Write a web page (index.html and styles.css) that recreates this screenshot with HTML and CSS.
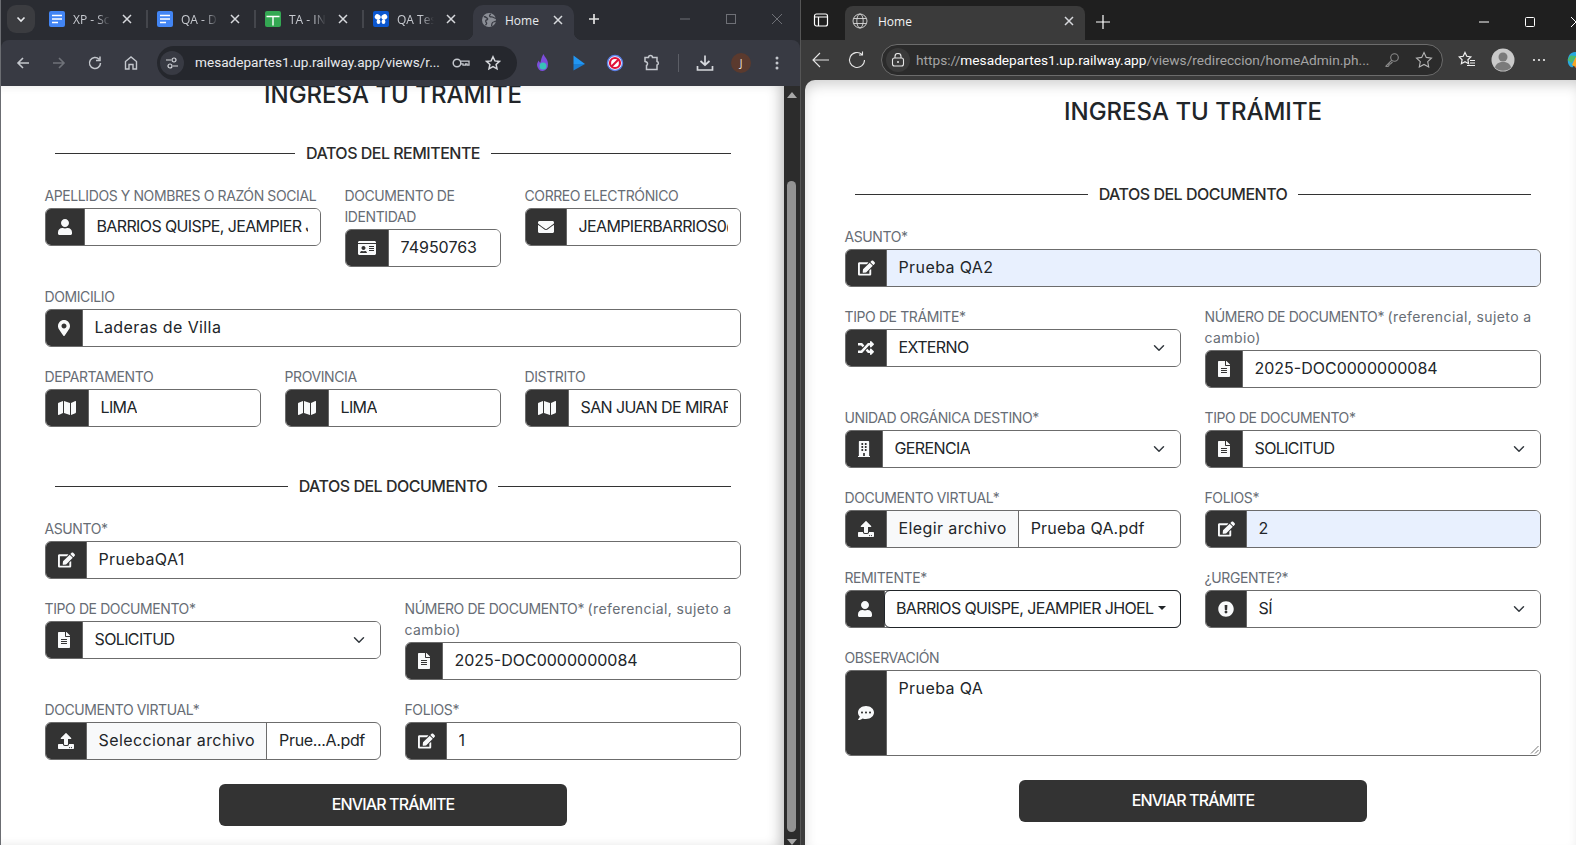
FILE: index.html
```html
<!DOCTYPE html>
<html lang="es">
<head>
<meta charset="utf-8">
<title>Mesa de partes</title>
<link rel="stylesheet" href="styles.css">
</head>
<body>
<svg class="defs" aria-hidden="true">
  <symbol id="i-user" viewBox="0 0 448 512"><path d="M224 256c70.7 0 128-57.3 128-128S294.7 0 224 0 96 57.3 96 128s57.3 128 128 128zm89.6 32h-16.7c-22.2 10.2-46.9 16-72.9 16s-50.6-5.8-72.9-16h-16.7C60.2 288 0 348.2 0 422.4V464c0 26.5 21.5 48 48 48h352c26.5 0 48-21.5 48-48v-41.6c0-74.2-60.2-134.4-134.4-134.4z"/></symbol>
  <symbol id="i-mail" viewBox="0 0 512 512"><path d="M502.3 190.8c3.9-3.1 9.7-.2 9.7 4.7V400c0 26.5-21.5 48-48 48H48c-26.5 0-48-21.5-48-48V195.6c0-5 5.7-7.8 9.7-4.7 22.4 17.4 52.1 39.5 154.1 113.6 21.1 15.4 56.7 47.8 92.2 47.6 35.7.3 72-32.8 92.3-47.6 102-74.1 131.6-96.3 154-113.7zM256 320c23.2.4 56.6-29.2 73.4-41.4 132.7-96.3 142.8-104.7 173.4-128.7 5.8-4.5 9.2-11.5 9.2-18.9v-19c0-26.5-21.5-48-48-48H48C21.5 64 0 85.5 0 112v19c0 7.4 3.4 14.3 9.2 18.9 30.6 23.9 40.7 32.4 173.4 128.7 16.8 12.2 50.2 41.8 73.4 41.4z"/></symbol>
  <symbol id="i-pin" viewBox="0 0 384 512"><path d="M172.268 501.67C26.97 291.031 0 269.413 0 192 0 85.961 85.961 0 192 0s192 85.961 192 192c0 77.413-26.97 99.031-172.268 309.67-9.535 13.774-29.93 13.773-39.464 0zM192 272c44.183 0 80-35.817 80-80s-35.817-80-80-80-80 35.817-80 80 35.817 80 80 80z"/></symbol>
  <symbol id="i-map" viewBox="0 0 576 512"><path d="M0 117.66v346.32c0 11.32 11.43 19.06 21.94 14.86L160 416V32L20.12 87.95A32.006 32.006 0 0 0 0 117.66zM192 416l192 64V96L192 32v384zM554.06 33.16L416 96v384l139.88-55.95A31.996 31.996 0 0 0 576 394.34V48.02c0-11.32-11.43-19.06-21.94-14.86z"/></symbol>
  <symbol id="i-edit" viewBox="0 0 576 512"><path d="M402.6 83.2l90.2 90.2c3.8 3.8 3.8 10 0 13.8L274.4 405.6l-92.8 10.3c-12.4 1.4-22.9-9.1-21.5-21.5l10.3-92.8L388.8 83.2c3.8-3.8 10-3.8 13.8 0zm162-22.9l-48.8-48.8c-15.2-15.2-39.9-15.2-55.2 0l-35.4 35.4c-3.8 3.8-3.8 10 0 13.8l90.2 90.2c3.8 3.8 10 3.8 13.8 0l35.4-35.4c15.2-15.3 15.2-40 0-55.2zM384 346.2V448H64V128h229.8c3.2 0 6.2-1.3 8.5-3.5l40-40c7.6-7.6 2.2-20.5-8.5-20.5H48C21.5 64 0 85.5 0 112v352c0 26.5 21.5 48 48 48h352c26.5 0 48-21.5 48-48V306.2c0-10.7-12.9-16-20.5-8.5l-40 40c-2.2 2.3-3.5 5.3-3.5 8.5z"/></symbol>
  <symbol id="i-file" viewBox="0 0 384 512"><path d="M224 136V0H24C10.7 0 0 10.7 0 24v464c0 13.3 10.7 24 24 24h336c13.3 0 24-10.7 24-24V160H248c-13.2 0-24-10.8-24-24zm64 236c0 6.6-5.4 12-12 12H108c-6.6 0-12-5.4-12-12v-8c0-6.6 5.4-12 12-12h168c6.6 0 12 5.4 12 12v8zm0-64c0 6.6-5.4 12-12 12H108c-6.6 0-12-5.4-12-12v-8c0-6.6 5.4-12 12-12h168c6.6 0 12 5.4 12 12v8zm0-72v8c0 6.6-5.4 12-12 12H108c-6.6 0-12-5.4-12-12v-8c0-6.6 5.4-12 12-12h168c6.6 0 12 5.4 12 12zm96-114.1v6.1H256V0h6.1c6.4 0 12.5 2.5 17 7l97.9 98c4.5 4.5 7 10.6 7 16.9z"/></symbol>
  <symbol id="i-upload" viewBox="0 0 512 512"><path d="M296 384h-80c-13.3 0-24-10.7-24-24V192h-87.7c-17.8 0-26.7-21.5-14.1-34.1L242.3 5.7c7.5-7.5 19.8-7.5 27.3 0l152.2 152.2c12.6 12.6 3.7 34.1-14.1 34.1H320v168c0 13.3-10.7 24-24 24zm216-8v112c0 13.3-10.7 24-24 24H24c-13.3 0-24-10.7-24-24V376c0-13.3 10.7-24 24-24h136v8c0 30.9 25.1 56 56 56h80c30.9 0 56-25.1 56-56v-8h136c13.3 0 24 10.7 24 24zm-124 88c0-11-9-20-20-20s-20 9-20 20 9 20 20 20 20-9 20-20zm64 0c0-11-9-20-20-20s-20 9-20 20 9 20 20 20 20-9 20-20z"/></symbol>
  <symbol id="i-id" viewBox="0 0 576 512"><path d="M528 32H48C21.5 32 0 53.5 0 80v16h576V80c0-26.5-21.5-48-48-48zM0 432c0 26.5 21.5 48 48 48h480c26.5 0 48-21.5 48-48V128H0v304zm352-232c0-4.4 3.6-8 8-8h144c4.4 0 8 3.6 8 8v16c0 4.4-3.6 8-8 8H360c-4.4 0-8-3.6-8-8v-16zm0 64c0-4.4 3.6-8 8-8h144c4.4 0 8 3.6 8 8v16c0 4.4-3.6 8-8 8H360c-4.4 0-8-3.6-8-8v-16zm0 64c0-4.4 3.6-8 8-8h144c4.4 0 8 3.6 8 8v16c0 4.4-3.6 8-8 8H360c-4.4 0-8-3.6-8-8v-16zM176 192c35.3 0 64 28.7 64 64s-28.7 64-64 64-64-28.7-64-64 28.7-64 64-64zM67.1 396.2C75.5 370.5 99.6 352 128 352h8.2c12.3 5.1 25.7 8 39.8 8s27.6-2.9 39.8-8h8.2c28.4 0 52.5 18.5 60.9 44.2 3.2 9.9-5.2 19.8-15.6 19.8H82.7c-10.4 0-18.8-10-15.6-19.8z"/></symbol>
  <symbol id="i-random" viewBox="0 0 512 512"><path d="M504.971 359.029c9.373 9.373 9.373 24.569 0 33.941l-80 79.984c-15.01 15.01-40.971 4.49-40.971-16.971V416h-58.785a12.004 12.004 0 0 1-8.773-3.812l-70.556-75.596 53.333-57.143L352 336h32v-39.981c0-21.438 25.943-31.998 40.971-16.971l80 79.981zM12 176h84l52.781 56.551 53.333-57.143-70.556-75.596A11.999 11.999 0 0 0 122.785 96H12c-6.627 0-12 5.373-12 12v56c0 6.627 5.373 12 12 12zm372 0v39.984c0 21.46 25.961 31.98 40.971 16.971l80-79.984c9.373-9.373 9.373-24.569 0-33.941l-80-79.981C409.943 24.021 384 34.582 384 56.019V96h-58.785a12.004 12.004 0 0 0-8.773 3.812L96 336H12c-6.627 0-12 5.373-12 12v56c0 6.627 5.373 12 12 12h110.785c3.326 0 6.503-1.381 8.773-3.812L352 176h32z"/></symbol>
  <symbol id="i-building" viewBox="0 0 448 512" preserveAspectRatio="none"><path d="M436 480h-20V24c0-13.255-10.745-24-24-24H56C42.745 0 32 10.745 32 24v456H12c-6.627 0-12 5.373-12 12v20h448v-20c0-6.627-5.373-12-12-12zM128 76c0-6.627 5.373-12 12-12h40c6.627 0 12 5.373 12 12v40c0 6.627-5.373 12-12 12h-40c-6.627 0-12-5.373-12-12V76zm0 96c0-6.627 5.373-12 12-12h40c6.627 0 12 5.373 12 12v40c0 6.627-5.373 12-12 12h-40c-6.627 0-12-5.373-12-12v-40zm52 148h-40c-6.627 0-12-5.373-12-12v-40c0-6.627 5.373-12 12-12h40c6.627 0 12 5.373 12 12v40c0 6.627-5.373 12-12 12zm76 160h-64v-84c0-6.627 5.373-12 12-12h40c6.627 0 12 5.373 12 12v84zm64-172c0 6.627-5.373 12-12 12h-40c-6.627 0-12-5.373-12-12v-40c0-6.627 5.373-12 12-12h40c6.627 0 12 5.373 12 12v40zm0-96c0 6.627-5.373 12-12 12h-40c-6.627 0-12-5.373-12-12v-40c0-6.627 5.373-12 12-12h40c6.627 0 12 5.373 12 12v40zm0-96c0 6.627-5.373 12-12 12h-40c-6.627 0-12-5.373-12-12V76c0-6.627 5.373-12 12-12h40c6.627 0 12 5.373 12 12v40z"/></symbol>
  <symbol id="i-alert" viewBox="0 0 512 512"><path d="M504 256c0 136.997-111.043 248-248 248S8 392.997 8 256C8 119.083 119.043 8 256 8s248 111.083 248 248zm-248 50c-25.405 0-46 20.595-46 46s20.595 46 46 46 46-20.595 46-46-20.595-46-46-46zm-43.673-165.346l7.418 136c.347 6.364 5.609 11.346 11.982 11.346h48.546c6.373 0 11.635-4.982 11.982-11.346l7.418-136c.375-6.874-5.098-12.654-11.982-12.654h-63.383c-6.884 0-12.356 5.78-11.981 12.654z"/></symbol>
  <symbol id="i-comment" viewBox="0 0 512 512"><path d="M256 32C114.6 32 0 125.1 0 240c0 49.6 21.4 95 57 130.7C44.5 421.1 2.7 466 2.2 466.5c-2.2 2.3-2.8 5.7-1.5 8.7S4.8 480 8 480c66.3 0 116-31.8 140.6-51.4 32.7 12.3 69 19.4 107.4 19.4 141.4 0 256-93.1 256-208S397.4 32 256 32zM128 272c-17.7 0-32-14.3-32-32s14.3-32 32-32 32 14.3 32 32-14.3 32-32 32zm128 0c-17.7 0-32-14.3-32-32s14.3-32 32-32 32 14.3 32 32-14.3 32-32 32zm128 0c-17.7 0-32-14.3-32-32s14.3-32 32-32 32 14.3 32 32-14.3 32-32 32z"/></symbol>
  <symbol id="i-chev" viewBox="0 0 16 16"><path d="M2 5l6 6 6-6" fill="none" stroke="#343a40" stroke-width="2" stroke-linecap="round" stroke-linejoin="round"/></symbol>
  <symbol id="i-x" viewBox="0 0 10 10"><path d="M1 1l8 8M9 1l-8 8" fill="none" stroke="currentColor" stroke-width="1.5"/></symbol>
  <symbol id="i-docs" viewBox="0 0 16 16"><rect width="16" height="16" rx="2" fill="#4285f4"/><path d="M3 4.500h10M3 8h10M3 11.500h6" stroke="#fff" stroke-width="1.600"/></symbol>
</svg>

<section class="win chrome">
  <header class="c-tabs">
    <div class="c-list"><svg class="s10" viewBox="0 0 10 10"><path d="M1.500 3.500L5 7l3.500-3.500" fill="none" stroke="#e8eaed" stroke-width="1.600"/></svg></div>
    <div class="c-tab"><svg class="s16"><use href="#i-docs"/></svg><span class="c-title">XP - Sc</span><svg class="x"><use href="#i-x"/></svg><i class="c-sep"></i></div>
    <div class="c-tab"><svg class="s16"><use href="#i-docs"/></svg><span class="c-title">QA - D</span><svg class="x"><use href="#i-x"/></svg><i class="c-sep"></i></div>
    <div class="c-tab"><svg class="s16" viewBox="0 0 16 16"><rect width="16" height="16" rx="2" fill="#34a853"/><path d="M1.500 5.500h13M8 5.500v9" stroke="#fff" stroke-width="1.400"/></svg><span class="c-title">TA - IN</span><svg class="x"><use href="#i-x"/></svg><i class="c-sep"></i></div>
    <div class="c-tab"><svg class="s16" viewBox="0 0 16 16"><rect width="16" height="16" rx="2" fill="#0b57d0"/><g fill="#fff"><ellipse cx="4.700" cy="6" rx="3" ry="2.700" transform="rotate(30 4.700 6)"/><ellipse cx="11.300" cy="6" rx="3" ry="2.700" transform="rotate(-30 11.300 6)"/><ellipse cx="5.500" cy="10.800" rx="1.900" ry="2.200"/><ellipse cx="10.500" cy="10.800" rx="1.900" ry="2.200"/></g></svg><span class="c-title">QA Tes</span><svg class="x"><use href="#i-x"/></svg></div>
    <div class="c-active">
      <svg class="s14" viewBox="0 0 16 16"><circle cx="8" cy="8" r="8" fill="#8b8e96"/><path d="M2 4c2 0 3 1 4 2s0 2-1 2-1 2 0 3-1 3-1 3M10 1c-1 1-2 2-1 3s3 0 4 1 2 1 3 1M11 15c0-2 0-3 1-4s3-1 4-2" fill="none" stroke="#383a43" stroke-width="1.500"/></svg>
      <span class="c-home">Home</span>
      <svg class="x x-end"><use href="#i-x"/></svg>
    </div>
    <svg class="plus" viewBox="0 0 12 12"><path d="M6 1v10M1 6h10" stroke="#e3e3e3" stroke-width="1.700"/></svg>
    <div class="caps">
      <span class="cap"><svg class="s12" viewBox="0 0 12 12"><path d="M1 6h10" stroke="#6e7076"/></svg></span>
      <span class="cap"><svg class="s12" viewBox="0 0 12 12"><rect x="1.500" y="1.500" width="9" height="9" fill="none" stroke="#6e7076"/></svg></span>
      <span class="cap"><svg class="s12" viewBox="0 0 12 12"><path d="M1 1l10 10M11 1L1 11" stroke="#6e7076"/></svg></span>
    </div>
  </header>
  <nav class="c-bar">
    <span class="tb"><svg class="s16" viewBox="0 0 16 16"><path d="M14 8H3M8 3L3 8l5 5" fill="none" stroke="#c4c7cd" stroke-width="1.600"/></svg></span>
    <span class="tb"><svg class="s16" viewBox="0 0 16 16"><path d="M2 8h11M8 3l5 5-5 5" fill="none" stroke="#6f7279" stroke-width="1.600"/></svg></span>
    <span class="tb"><svg class="s16" viewBox="0 0 16 16"><path d="M13.500 8A5.500 5.500 0 1 1 12 4.200M13 1.500v4H9" fill="none" stroke="#c4c7cd" stroke-width="1.500"/></svg></span>
    <span class="tb"><svg class="s16" viewBox="0 0 16 16"><path d="M2.500 14V6.500L8 2l5.500 4.500V14H10V9.500H6V14z" fill="none" stroke="#c4c7cd" stroke-width="1.400"/></svg></span>
    <div class="omni">
      <span class="tune"><svg class="s14" viewBox="0 0 14 14"><path d="M6 4H1M13 10H8" stroke="#d5d7dc" stroke-width="1.200"/><circle cx="9" cy="4" r="2" fill="none" stroke="#d5d7dc" stroke-width="1.200"/><circle cx="5" cy="10" r="2" fill="none" stroke="#d5d7dc" stroke-width="1.200"/></svg></span>
      <span class="omni-url">mesadepartes1.up.railway.app/views/r...</span>
      <span class="om-btn om-first"><svg class="s18" viewBox="0 0 18 18"><circle cx="5" cy="9" r="3.800" fill="none" stroke="#c4c7cd" stroke-width="1.500"/><path d="M8.800 7.200h8.200v4h-2V9.800h-1.500v1.400H11V9.800H8.800" fill="none" stroke="#c4c7cd" stroke-width="1.300"/></svg></span>
      <span class="om-btn"><svg class="s16" viewBox="0 0 16 16"><path d="M8 1.800l1.900 4.100 4.500.5-3.300 3 .9 4.400L8 11.600l-4 2.200.9-4.400-3.300-3 4.500-.5z" fill="none" stroke="#d5d7dc" stroke-width="1.500"/></svg></span>
    </div>
    <span class="tb tb-ext"><svg class="s18" viewBox="0 0 18 18"><path d="M9.500 0c1 3 4.500 5 4.500 10a5.500 6.500 0 0 1-11 1c0-2 1-3.500 2-4.500 0 1.500.5 2 1.500 2C7 6 7.500 3 9.500 0z" fill="#7c4ddb"/><circle cx="9" cy="12" r="3.500" fill="#38c1b8"/></svg></span>
    <span class="tb"><svg class="s18" viewBox="0 0 18 18"><path d="M3.500 1.500l11.500 8.500h-11.500z" fill="#2196f3"/><path d="M3.500 10h11.500l-11.500 6.500z" fill="#1a7fd6"/></svg></span>
    <span class="tb"><svg class="s18" viewBox="0 0 18 18"><circle cx="9" cy="9" r="7.500" fill="#fff" stroke="#5b7ee5" stroke-width="1.400"/><circle cx="9" cy="9" r="5" fill="none" stroke="#e0103a" stroke-width="2.200"/><path d="M12.500 5.500l-7 7" stroke="#e0103a" stroke-width="2.200"/></svg></span>
    <span class="tb"><svg class="s18" viewBox="0 0 18 18"><path d="M3 3.500h3.500a2 2 0 0 1 4 0H15v4a1.800 1.800 0 0 1 0 3.500v4.500H4.500V11.500a2 2 0 0 0 0-3.500L3 7.500z" fill="none" stroke="#c4c7cd" stroke-width="1.500"/></svg></span>
    <i class="c-bar-sep"></i>
    <span class="tb"><svg class="s18" viewBox="0 0 18 18"><path d="M9 1.500v9M4.500 7L9 11l4.500-4M1.500 12v4h15v-4" fill="none" stroke="#d5d7dc" stroke-width="1.700"/></svg></span>
    <span class="tb"><span class="avatar">J</span></span>
    <span class="tb"><svg class="s16" viewBox="0 0 16 16"><circle cx="8" cy="3" r="1.500" fill="#c4c7cd"/><circle cx="8" cy="8" r="1.500" fill="#c4c7cd"/><circle cx="8" cy="13" r="1.500" fill="#c4c7cd"/></svg></span>
  </nav>
  <div class="c-body">
    <main class="page page-left">
      <div class="form form-left">
        <h1 class="title title-left">INGRESA TU TRÁMITE</h1>
        <h2 class="sec"><span>DATOS DEL REMITENTE</span></h2>
        <div class="row">
          <div class="c5"><label class="lb">APELLIDOS Y NOMBRES O RAZÓN SOCIAL</label><div class="ig"><span class="ico"><svg class="w14"><use href="#i-user"/></svg></span><div class="ctl"><span class="val up">BARRIOS QUISPE, JEAMPIER JHOEL</span></div></div></div>
          <div class="c3"><label class="lb">DOCUMENTO DE IDENTIDAD</label><div class="ig"><span class="ico"><svg class="w18"><use href="#i-id"/></svg></span><div class="ctl"><span class="val">74950763</span></div></div></div>
          <div class="c4"><label class="lb">CORREO ELECTRÓNICO</label><div class="ig"><span class="ico"><svg class="w16"><use href="#i-mail"/></svg></span><div class="ctl"><span class="val up">JEAMPIERBARRIOS0@GMAIL.COM</span></div></div></div>
          <div class="c12"><label class="lb">DOMICILIO</label><div class="ig"><span class="ico"><svg class="w12"><use href="#i-pin"/></svg></span><div class="ctl"><span class="val lo">Laderas de Villa</span></div></div></div>
          <div class="c4"><label class="lb">DEPARTAMENTO</label><div class="ig"><span class="ico"><svg class="w18"><use href="#i-map"/></svg></span><div class="ctl"><span class="val up">LIMA</span></div></div></div>
          <div class="c4"><label class="lb">PROVINCIA</label><div class="ig"><span class="ico"><svg class="w18"><use href="#i-map"/></svg></span><div class="ctl"><span class="val up">LIMA</span></div></div></div>
          <div class="c4"><label class="lb">DISTRITO</label><div class="ig"><span class="ico"><svg class="w18"><use href="#i-map"/></svg></span><div class="ctl"><span class="val up">SAN JUAN DE MIRAFLORES</span></div></div></div>
        </div>
        <h2 class="sec sec-second"><span>DATOS DEL DOCUMENTO</span></h2>
        <div class="row">
          <div class="c12"><label class="lb">ASUNTO*</label><div class="ig"><span class="ico"><svg class="w17"><use href="#i-edit"/></svg></span><div class="ctl"><span class="val lo">PruebaQA1</span></div></div></div>
          <div class="c6"><label class="lb">TIPO DE DOCUMENTO*</label><div class="ig"><span class="ico"><svg class="w12"><use href="#i-file"/></svg></span><div class="ctl ctl-sel"><span class="val up">SOLICITUD</span><svg class="chev"><use href="#i-chev"/></svg></div></div></div>
          <div class="c6"><label class="lb">NÚMERO DE DOCUMENTO* <span class="lw">(referencial, sujeto a</span> <span class="lw">cambio)</span></label><div class="ig"><span class="ico"><svg class="w12"><use href="#i-file"/></svg></span><div class="ctl"><span class="val">2025-DOC0000000084</span></div></div></div>
          <div class="c6"><label class="lb">DOCUMENTO VIRTUAL*</label><div class="ig"><span class="ico"><svg class="w16"><use href="#i-upload"/></svg></span><span class="fbtn">Seleccionar archivo</span><span class="fname fname-short">Prue...A.pdf</span></div></div>
          <div class="c6"><label class="lb">FOLIOS*</label><div class="ig"><span class="ico"><svg class="w17"><use href="#i-edit"/></svg></span><div class="ctl"><span class="val">1</span></div></div></div>
        </div>
        <button class="send">ENVIAR TRÁMITE</button>
      </div>
    </main>
    <aside class="sbar">
      <i class="arrow-up"></i>
      <i class="thumb"></i>
      <i class="arrow-down"></i>
    </aside>
  </div>
</section>

<section class="win edge">
  <header class="e-tabs">
    <span class="e-side"><svg class="s16" viewBox="0 0 16 16"><rect x="1.500" y="2" width="13" height="12" rx="2" fill="none" stroke="#fff" stroke-width="1.200"/><path d="M1.500 5H14.500M5.500 5v9" stroke="#fff" stroke-width="1.200"/></svg></span>
    <div class="e-tab">
      <svg class="s16" viewBox="0 0 16 16"><g fill="none" stroke="#d8d8d8" stroke-width=".9"><circle cx="8" cy="8" r="7"/><ellipse cx="8" cy="8" rx="3.200" ry="7"/><path d="M1.500 5.500h13M1.500 10.500h13"/></g></svg>
      <span class="e-home">Home</span>
      <svg class="x x-edge"><use href="#i-x"/></svg>
    </div>
    <svg class="e-plus" viewBox="0 0 14 14"><path d="M7 0v14M0 7h14" stroke="#fff" stroke-width="1.200"/></svg>
    <div class="caps caps-edge">
      <span class="cap"><svg class="s12" viewBox="0 0 12 12"><path d="M1 6h10" stroke="#fff"/></svg></span>
      <span class="cap"><svg class="s12" viewBox="0 0 12 12"><rect x="1.500" y="1.500" width="9" height="9" rx="1" fill="none" stroke="#fff"/></svg></span>
      <span class="cap"><svg class="s12" viewBox="0 0 12 12"><path d="M1 1l10 10M11 1L1 11" stroke="#fff"/></svg></span>
    </div>
  </header>
  <nav class="e-bar">
    <span class="tb"><svg class="s18" viewBox="0 0 18 18"><path d="M17 9H1M8 2L1 9l7 7" fill="none" stroke="#e6e6e6" stroke-width="1.100"/></svg></span>
    <span class="tb"><svg class="s18" viewBox="0 0 18 18"><path d="M16.500 9a7.500 7.500 0 1 1-2.500-5.600M14.500 .5v3.500H11" fill="none" stroke="#e6e6e6" stroke-width="1.100"/></svg></span>
    <div class="addr">
      <span class="lock"><svg class="s14" viewBox="0 0 14 14"><rect x="1.500" y="5" width="11" height="8" rx="2" fill="none" stroke="#e6e6e6" stroke-width="1.100"/><path d="M4 5V3.500a3 3 0 0 1 6 0V5" fill="none" stroke="#e6e6e6" stroke-width="1.100"/><circle cx="7" cy="9" r="1" fill="#e6e6e6"/></svg></span>
      <span class="addr-url"><span class="dim">https://</span><b class="dom">mesadepartes1.up.railway.app</b><span class="dim">/views/redireccion/homeAdmin.ph...</span></span>
      <span class="ad-btn ad-first"><svg class="s16" viewBox="0 0 16 16"><circle cx="10.500" cy="5.500" r="3.800" fill="none" stroke="#8a8a8a" stroke-width="1.100"/><path d="M7.800 8.200L2 14v.5h2l1-1v-1.500h1.500L8.500 10" fill="none" stroke="#8a8a8a" stroke-width="1.100"/></svg></span>
      <span class="ad-btn"><svg class="s18" viewBox="0 0 18 18"><path d="M9 1.500l2.300 4.900 5.200.7-3.800 3.600 1 5.200L9 13.400l-4.700 2.500 1-5.200-3.800-3.600 5.200-.7z" fill="none" stroke="#b5b5b5" stroke-width="1.100"/></svg></span>
    </div>
    <span class="tb tb-e1"><svg class="s18" viewBox="0 0 18 18"><path d="M7 1.500l1.800 3.800 4 .6-2.900 2.800.7 4-3.600-2-3.600 2 .7-4L1.200 5.900l4-.6z" fill="none" stroke="#f0f0f0" stroke-width="1.200"/><path d="M12 9.500h5M12 12h5M9 14.500h8" stroke="#f0f0f0" stroke-width="1.100"/></svg></span>
    <span class="tb"><svg class="s24" viewBox="0 0 24 24"><circle cx="12" cy="12" r="11.500" fill="#c9c9c9"/><circle cx="12" cy="9" r="4.500" fill="#7a7a7a"/><path d="M4 19.500c1-4 4-5.500 8-5.500s7 1.500 8 5.500A11.500 11.500 0 0 1 4 19.500z" fill="#7a7a7a"/></svg></span>
    <span class="tb"><svg class="s16" viewBox="0 0 16 16"><circle cx="3" cy="8" r="1.100" fill="#eee"/><circle cx="8" cy="8" r="1.100" fill="#eee"/><circle cx="13" cy="8" r="1.100" fill="#eee"/></svg></span>
    <span class="tb"><svg class="s18" viewBox="0 0 18 18"><path d="M2 12C1 6 4 1 9 1h3L7 16c-2 1-4-1-5-4z" fill="#27a9e1"/><path d="M6 14L10 5c1-2 5-3 7-1l-3 11c-1 2-4 2-8-1z" fill="#f5a623"/><path d="M1.500 9l4 3 5-7-6-.5z" fill="#4cbb6c"/><path d="M9 17l5-1 3-9-4 1z" fill="#ec5c3f"/></svg></span>
  </nav>
  <main class="page page-right">
    <div class="form form-right">
      <h1 class="title title-right">INGRESA TU TRÁMITE</h1>
      <h2 class="sec"><span>DATOS DEL DOCUMENTO</span></h2>
      <div class="row">
        <div class="c12"><label class="lb">ASUNTO*</label><div class="ig"><span class="ico"><svg class="w17"><use href="#i-edit"/></svg></span><div class="ctl ctl-fill"><span class="val lo">Prueba QA2</span></div></div></div>
        <div class="c6"><label class="lb">TIPO DE TRÁMITE*</label><div class="ig"><span class="ico"><svg class="w16"><use href="#i-random"/></svg></span><div class="ctl ctl-sel"><span class="val up">EXTERNO</span><svg class="chev"><use href="#i-chev"/></svg></div></div></div>
        <div class="c6"><label class="lb">NÚMERO DE DOCUMENTO* <span class="lw">(referencial, sujeto a</span> <span class="lw">cambio)</span></label><div class="ig"><span class="ico"><svg class="w12"><use href="#i-file"/></svg></span><div class="ctl"><span class="val">2025-DOC0000000084</span></div></div></div>
        <div class="c6"><label class="lb">UNIDAD ORGÁNICA DESTINO*</label><div class="ig"><span class="ico"><svg class="w12"><use href="#i-building"/></svg></span><div class="ctl ctl-sel"><span class="val up">GERENCIA</span><svg class="chev"><use href="#i-chev"/></svg></div></div></div>
        <div class="c6"><label class="lb">TIPO DE DOCUMENTO*</label><div class="ig"><span class="ico"><svg class="w12"><use href="#i-file"/></svg></span><div class="ctl ctl-sel"><span class="val up">SOLICITUD</span><svg class="chev"><use href="#i-chev"/></svg></div></div></div>
        <div class="c6"><label class="lb">DOCUMENTO VIRTUAL*</label><div class="ig"><span class="ico"><svg class="w16"><use href="#i-upload"/></svg></span><span class="fbtn">Elegir archivo</span><span class="fname">Prueba QA.pdf</span></div></div>
        <div class="c6"><label class="lb">FOLIOS*</label><div class="ig"><span class="ico"><svg class="w17"><use href="#i-edit"/></svg></span><div class="ctl ctl-fill"><span class="val">2</span></div></div></div>
        <div class="c6"><label class="lb">REMITENTE*</label><div class="ig ig-dd"><span class="ico"><svg class="w14"><use href="#i-user"/></svg></span><div class="ctl ctl-dd"><span class="val up">BARRIOS QUISPE, JEAMPIER JHOEL</span><i class="caret"></i></div></div></div>
        <div class="c6"><label class="lb">¿URGENTE?*</label><div class="ig"><span class="ico"><svg class="w16"><use href="#i-alert"/></svg></span><div class="ctl ctl-sel"><span class="val up">SÍ</span><svg class="chev"><use href="#i-chev"/></svg></div></div></div>
        <div class="c12"><label class="lb">OBSERVACIÓN</label><div class="ig ig-area"><span class="ico"><svg class="w16"><use href="#i-comment"/></svg></span><div class="ctl ctl-area"><span class="val lo">Prueba QA</span><svg class="grip" viewBox="0 0 9 9"><path d="M8.500 1L1 8.500M8.500 5L5 8.500" stroke="#777"/></svg></div></div></div>
      </div>
      <button class="send">ENVIAR TRÁMITE</button>
    </div>
  </main>
</section>
</body>
</html>
```

FILE: styles.css
```css
* { box-sizing: border-box; }
html, body { margin: 0; height: 100%; }
body {
  display: flex;
  width: 1576px;
  height: 845px;
  overflow: hidden;
  background: #1f1f1f;
  font-family: Inter, "Liberation Sans", sans-serif;
  color: #212529;
}
.defs { width: 0; height: 0; display: block; position: absolute; }
svg { display: block; flex: none; }
.s10 { width: 10px; height: 10px; }
.s12 { width: 12px; height: 12px; }
.s14 { width: 14px; height: 14px; }
.s16 { width: 16px; height: 16px; }
.s18 { width: 18px; height: 18px; }
.s24 { width: 24px; height: 24px; }

.win { display: flex; flex-direction: column; height: 845px; overflow: hidden; }
.chrome { width: 800px; border-left: 1px solid #6b6d72; background: #2a2c32; }
.edge { width: 776px; border-left: 1px solid #555; background: #3b3b3b; }

/* Chrome strip */
.c-tabs { display: flex; align-items: center; height: 40px; flex: none; padding-left: 6px; color: #c7cad0; font: 12px "Open Sans", sans-serif; }
.c-list { display: flex; align-items: center; justify-content: center; width: 28px; height: 28px; margin: -3px 6px 0 0; background: #3b3c40; border-radius: 9px; }
.c-tab { display: flex; align-items: center; width: 108px; padding-left: 8px; margin-top: -3px; }
.c-title { width: 37px; margin-left: 8px; padding-top: 1px; white-space: nowrap; overflow: hidden; -webkit-mask-image: linear-gradient(90deg, #000 65%, transparent); mask-image: linear-gradient(90deg, #000 65%, transparent); }
.x { width: 10px; height: 10px; margin-left: 12px; color: #d7d9dd; }
.c-sep { width: 2px; height: 18px; margin-left: 14px; background: #44464c; }
.c-active { position: relative; display: flex; align-items: center; align-self: flex-end; width: 101px; height: 35px; padding: 0 11px 5px 9px; background: #383a43; border-radius: 10px 10px 0 0; color: #e8eaed; }
.c-active::before, .c-active::after { content: ""; position: absolute; bottom: 0; width: 8px; height: 8px; }
.c-active::before { left: -8px; background: radial-gradient(circle at 0 0, transparent 8px, #383a43 8.500px); }
.c-active::after { right: -8px; background: radial-gradient(circle at 100% 0, transparent 8px, #383a43 8.500px); }
.c-home { margin-left: 9px; }
.x-end { margin-left: auto; }
.plus { width: 12px; height: 12px; margin: -3px 0 0 14px; }
.caps { display: flex; flex: none; margin-left: auto; margin-top: -3px; }
.cap { display: flex; align-items: center; justify-content: center; width: 46px; height: 32px; }

/* Chrome toolbar */
.c-bar { display: flex; align-items: center; height: 46px; flex: none; padding-left: 4px; background: #383a43; border-radius: 8px 8px 0 0; }
.tb { display: flex; align-items: center; justify-content: center; width: 36px; height: 36px; flex: none; }
.omni { display: flex; align-items: center; width: 360px; height: 34px; margin-left: 8px; padding-left: 5px; background: #25272d; border-radius: 17px; }
.tune { display: flex; align-items: center; justify-content: center; width: 24px; height: 24px; background: #383a43; border-radius: 50%; margin-left: -2px; }
.omni-url { margin: -2px 0 0 11px; font: 13.600px Roboto, sans-serif; color: #e8eaed; white-space: nowrap; }
.om-btn { display: flex; align-items: center; justify-content: center; width: 32px; height: 32px; }
.om-first { margin-left: auto; }
.om-btn:last-child { margin-right: 8px; }
.tb-ext { margin-left: 8px; }
.c-bar-sep { width: 1px; height: 18px; margin: 0 8px 0 9px; background: #5c5e66; }
.avatar { display: flex; align-items: center; justify-content: center; width: 20px; height: 20px; border-radius: 50%; background: #5b3a2e; color: #f0e6e2; font: 10px "Open Sans", sans-serif; }

/* Edge strip */
.e-tabs { display: flex; align-items: flex-end; height: 40px; flex: none; background: #1f1f1f; color: #f3f3f3; font: 500 12px "Open Sans", sans-serif; }
.e-side { display: flex; align-items: center; justify-content: center; width: 44px; height: 34px; margin-bottom: 3px; padding-right: 4px; }
.e-tab { display: flex; align-items: center; width: 240px; height: 34px; padding: 0 11px 4px 7px; background: #3b3b3b; border-radius: 8px 8px 0 0; }
.e-home { margin-left: 10px; }
.x-edge { margin-left: auto; }
.e-plus { width: 14px; height: 14px; margin: 0 0 11px 11px; }
.caps-edge { margin-bottom: 2px; margin-right: -23px; }

/* Edge toolbar */
.e-bar { display: flex; align-items: center; height: 40px; flex: none; padding-left: 2px; background: #3b3b3b; overflow: hidden; }
.addr { display: flex; align-items: center; width: 562px; height: 32px; margin-left: 6px; padding-left: 4px; border: 1px solid #6c6c6c; border-radius: 16px; background: #2b2b2b; flex: none; }
.lock { display: flex; align-items: center; justify-content: center; width: 24px; height: 24px; background: #3a3a3a; border-radius: 50%; }
.addr-url { margin-left: 6px; font: 13.700px Roboto, sans-serif; white-space: nowrap; }
.dim { color: #a5a5a5; }
.dom { color: #fff; font-weight: 400; }
.ad-btn { display: flex; align-items: center; justify-content: center; width: 32px; height: 30px; }
.ad-first { margin-left: auto; }
.ad-btn:last-child { margin-right: 2px; }
.tb-e1 { margin-left: 6px; }

/* Page */
.c-body { display: flex; flex: 1; min-height: 0; }
.page { overflow: hidden; background: #fff; }
.page-left { width: 783px; box-shadow: inset -9px 0 14px -6px rgba(0, 0, 0, .28); }
.page-right { flex: 1; min-height: 0; margin-left: 4px; border-radius: 10px 0 0 0; box-shadow: inset 2px 8px 14px -4px rgba(0, 0, 0, .2); }
.form { width: 696px; }
.form-left { margin: -9px 0 0 44px; }
.form-right { margin: 14px 0 0 40px; }
.title { margin: 0; font-size: 24px; font-weight: 500; line-height: 36px; text-align: center; color: #212529; }
.title-left { margin-bottom: 28px; }
.title-right { margin-bottom: 52px; }
.sec { display: flex; align-items: center; gap: 11px; margin: 0 0 21px; padding: 0 10px; font-size: 16px; font-weight: 500; line-height: 24px; letter-spacing: -.5px; color: #2b2b2b; white-space: nowrap; }
.sec::before, .sec::after { content: ""; flex: 1; height: 1px; background: #333; }
.sec-second { margin-top: 47px; }
.row { display: grid; grid-template-columns: repeat(12, 1fr); column-gap: 24px; row-gap: 20px; align-items: start; }
.c3 { grid-column: span 3; }
.c4 { grid-column: span 4; }
.c5 { grid-column: span 5; }
.c6 { grid-column: span 6; }
.c12 { grid-column: span 12; }
.lb { display: block; margin: -1px 0 2px -.5px; font-size: 14px; line-height: 21px; letter-spacing: -.4px; color: #676d75; }
.lw { letter-spacing: .4px; }

/* Input groups */
.ig { display: flex; height: 38px; border: 1px solid #6c6c6c; border-radius: 6px; overflow: hidden; font-size: 16px; line-height: 24px; }
.ico { display: flex; align-items: center; justify-content: center; padding: 0 12px; background: #333; flex: none; border-right: 1px solid #666; }
.ico svg { fill: #f8f9fa; height: 16px; }
.w12 { width: 12px; }
.w14 { width: 14px; }
.w16 { width: 16px; }
.w17 { width: 17px; margin: 0 -.5px; }
.w18 { width: 18px; }
.ctl { display: flex; align-items: center; flex: 1; min-width: 0; padding: 0 12px 2px 11.500px; background: #fff; color: #212529; }
.val { white-space: nowrap; overflow: hidden; }
.up { letter-spacing: -.62px; }
.lo { letter-spacing: .4px; }
.ctl-fill { background: #e8f0fe; }
.ctl-sel { justify-content: space-between; padding-right: 15px; }
.chev { width: 12px; height: 12px; margin-top: 2px; }
.fbtn { display: flex; align-items: center; padding: 0 11px 2px 11.500px; background: #f8f9fa; border-right: 1px solid #6c6c6c; white-space: nowrap; letter-spacing: .4px; }
.fname { display: flex; align-items: center; padding: 0 12px 2px; white-space: nowrap; letter-spacing: .2px; }
.fname-short { letter-spacing: -.35px; }
.ig-dd { overflow: visible; }
.ig-dd .ico { border-radius: 5px 0 0 5px; }
.ctl-dd { position: relative; margin: -1px -1px -1px -1px; padding: 0 6px 2px 11px; border: 1px solid #212529; border-radius: 6px; }
.caret { flex: none; width: 0; height: 0; border: 4px solid transparent; border-top-color: #212529; border-bottom: 0; margin-left: 4px; }
.ig-area { height: 86px; }
.ctl-area { position: relative; align-items: flex-start; padding-top: 5px; }
.grip { position: absolute; right: 1px; bottom: 1px; width: 9px; height: 9px; }

.send { display: block; width: 348px; height: 42px; margin: 24px auto 0; padding: 0 0 2px; border: 0; border-radius: 6px; background: #333; color: #fff; font: 500 16px Inter, sans-serif; letter-spacing: -.85px; }

/* Scrollbar */
.sbar { display: flex; flex-direction: column; align-items: center; width: 16px; background: #2c2c2c; flex: none; padding-right: 1px; }
.arrow-up { width: 0; height: 0; margin-top: 6px; border: 5px solid transparent; border-top: 0; border-bottom: 6px solid #a8a8a8; }
.thumb { width: 9px; height: 651px; margin-top: 83px; border-radius: 5px; background: #939393; }
.arrow-down { width: 0; height: 0; margin-top: 7px; border: 5px solid transparent; border-bottom: 0; border-top: 6px solid #a8a8a8; }
```
